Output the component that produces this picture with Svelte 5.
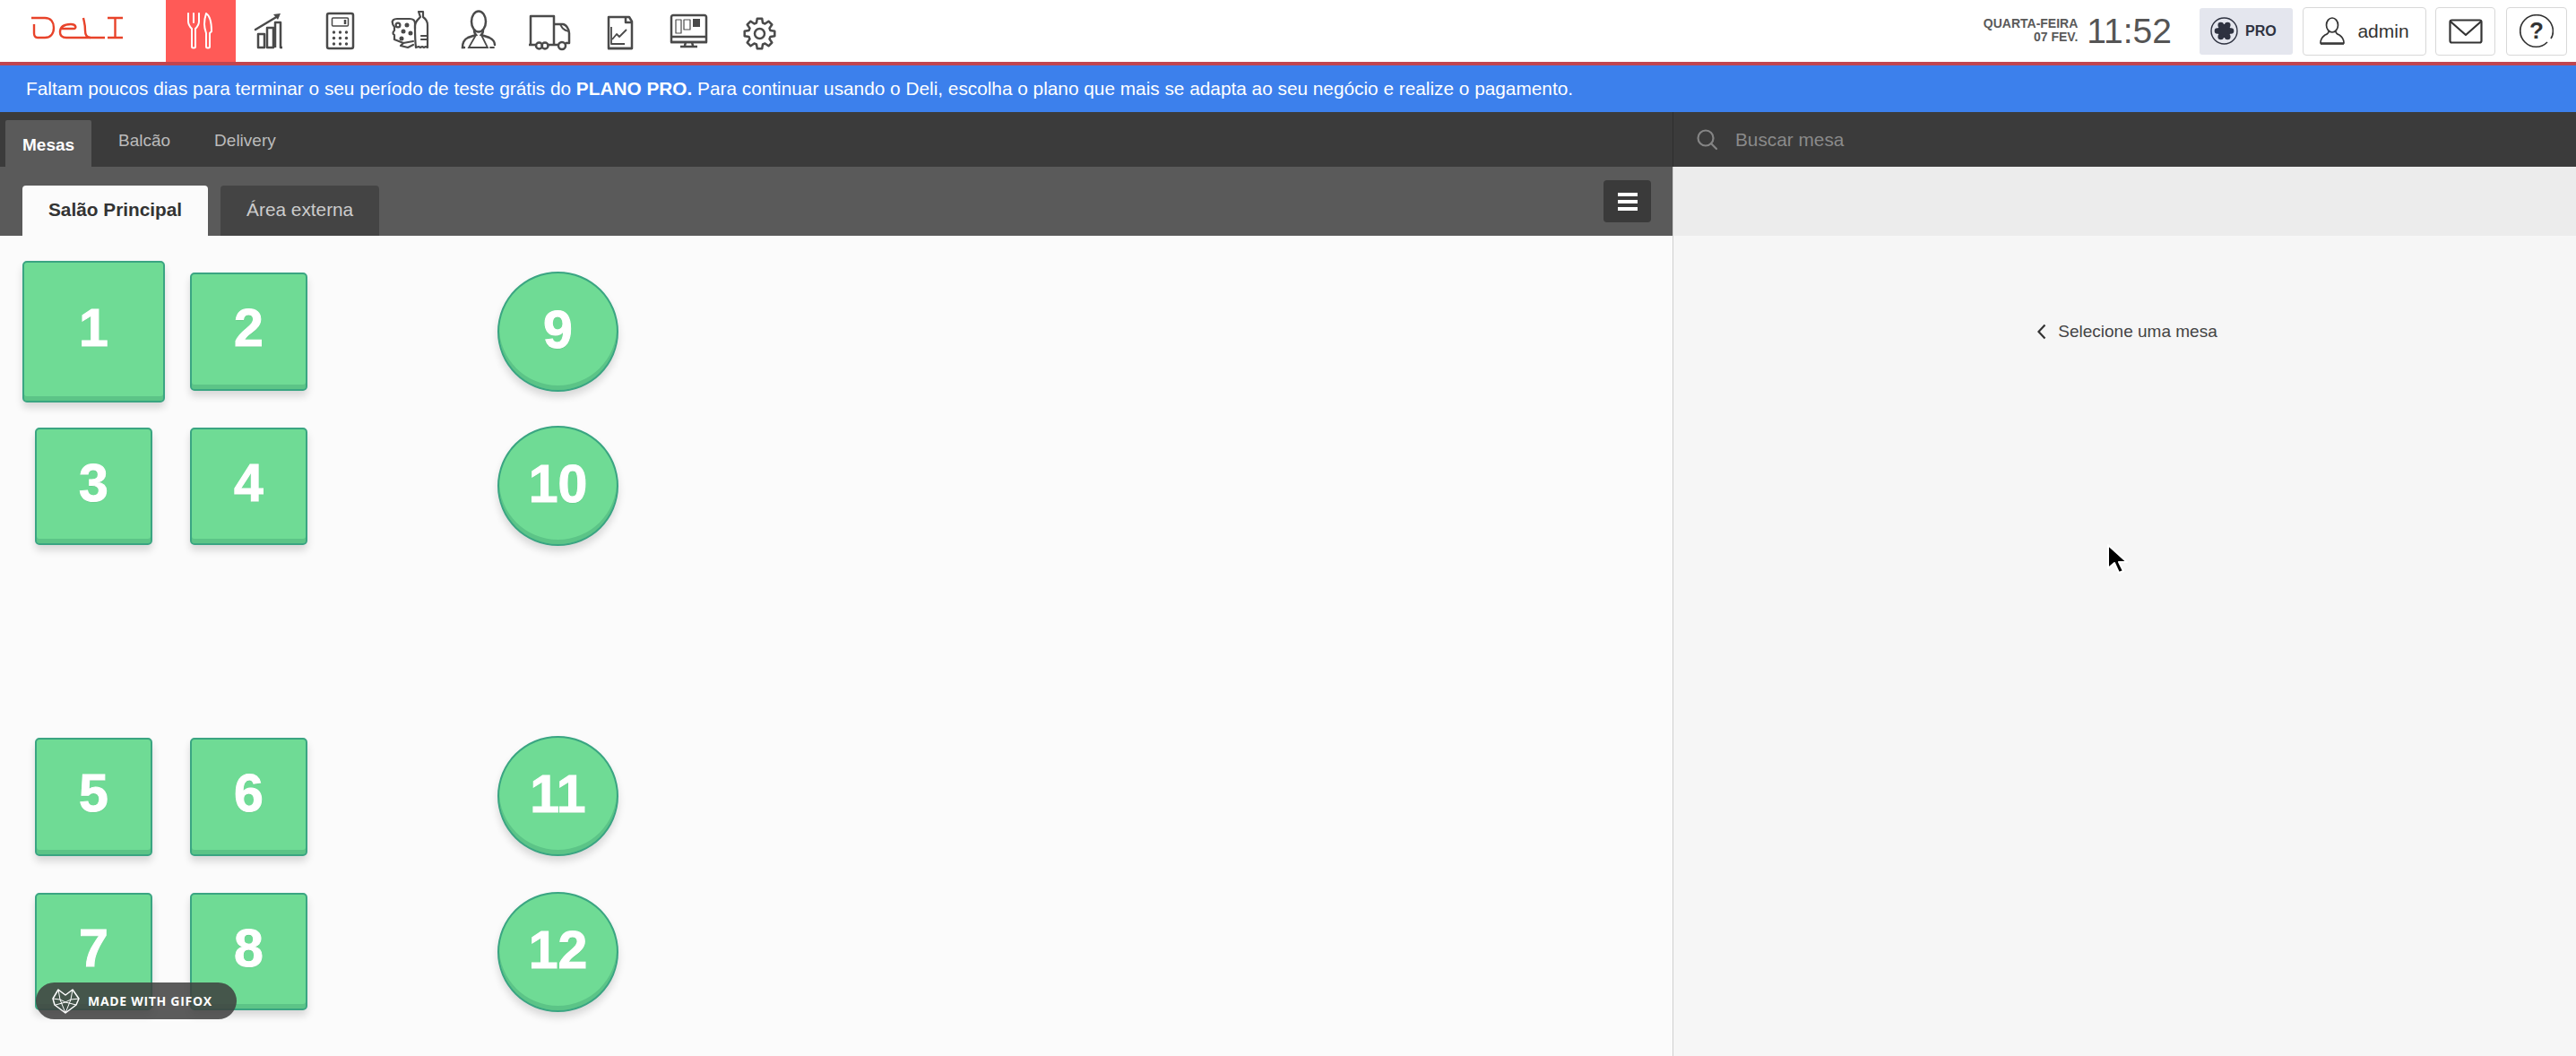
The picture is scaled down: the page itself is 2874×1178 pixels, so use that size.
<script>
    const tables = [
        { n: 1, x: 25, y: 28, w: 159, h: 158 },
        { n: 2, x: 212, y: 41, w: 131, h: 132 },
        { n: 3, x: 39, y: 214, w: 131, h: 131 },
        { n: 4, x: 212, y: 214, w: 131, h: 131 },
        { n: 5, x: 39, y: 560, w: 131, h: 132 },
        { n: 6, x: 212, y: 560, w: 131, h: 132 },
        { n: 7, x: 39, y: 733, w: 131, h: 131 },
        { n: 8, x: 212, y: 733, w: 131, h: 131 },
        { n: 9, x: 555, y: 40, w: 135, h: 134, round: true },
        { n: 10, x: 555, y: 212, w: 135, h: 134, round: true },
        { n: 11, x: 555, y: 558, w: 135, h: 134, round: true },
        { n: 12, x: 555, y: 732, w: 135, h: 134, round: true }
    ];

    // engrenagem de 8 dentes
    function gearPath(cx, cy, ro, ri, teeth) {
        const pts = [];
        const step = (Math.PI * 2) / teeth;
        for (let i = 0; i < teeth; i++) {
            const a = i * step - Math.PI / 2;
            const p = [
                [ri, a - step * 0.36],
                [ro, a - step * 0.2],
                [ro, a + step * 0.2],
                [ri, a + step * 0.36]
            ];
            for (const [r, t] of p) {
                pts.push(`${(cx + r * Math.cos(t)).toFixed(1)} ${(cy + r * Math.sin(t)).toFixed(1)}`);
            }
        }
        return 'M' + pts.join('L') + 'Z';
    }

    const lobes = [0, 60, 120, 180, 240, 300].map((d) => {
        const a = (d * Math.PI) / 180;
        return { x: 15.5 + 7.5 * Math.cos(a), y: 15.5 + 7.5 * Math.sin(a) };
    });

    const calcDots = [];
    for (let r = 0; r < 3; r++) {
        for (let c = 0; c < 3; c++) {
            calcDots.push({ x: 14.5 + c * 7, y: 24 + r * 6.5 });
        }
    }
</script>

<div class="app">
    <header class="top">
        <div class="logo">
            <svg width="110" height="30" viewBox="0 0 110 30" fill="none" stroke="#e8432a" stroke-width="2.400">
                <path d="M2 3H17C24 3 27 8 27 14 27 21 23 25 17 25H9C6 25 5 23 5 20V10" />
                <path d="M35 15H49C53 15 52 10 46 10 40 10 34 12 34 19 34 23 37 25 41 25H84" />
                <path d="M60 3C61 8 62 10 62 17 62 22 64 25 68 25" />
                <path d="M87 3h17M95.500 3v22M87 25h17" />
            </svg>
        </div>
        <nav class="modules">
            <div class="module active">
                <svg viewBox="0 0 44 44" fill="none" stroke="#fff" stroke-width="2" stroke-linecap="round" stroke-linejoin="round">
                    <path d="M8 3v9c0 4 2 6 4 8v20c0 2 4 2 4 0V20c2-2 4-4 4-8V3M14 3v10" />
                    <path d="M28 3c5 3 6 12 6 20l-2 2v15c0 2-4 2-4 0V25c-1-3-2-6-2-10s1-9 2-12z" />
                </svg>
            </div>
            <div class="module">
                <svg viewBox="0 0 44 44" fill="none" stroke="#4a4a4a" stroke-width="2.500" stroke-linejoin="round">
                    <path d="M5 21 30 6" stroke-linecap="round" />
                    <path d="M25 4l8-1-3 7z" fill="#4a4a4a" stroke="none" />
                    <path d="M8 41V26h7v15zM18 41V19h7v22zM27 41V13h6v28h2" />
                </svg>
            </div>
            <div class="module">
                <svg viewBox="0 0 44 44" fill="none" stroke="#4a4a4a" stroke-width="2.500">
                    <rect x="7" y="3" width="29" height="39" rx="2" />
                    <rect x="12.500" y="8" width="18" height="9" rx="1" stroke-width="1.500" />
                    <path d="M27 10v5" />
                    {#each calcDots as d}
                        <circle cx={d.x} cy={d.y} r="1.700" fill="#4a4a4a" stroke="none" />
                    {/each}
                </svg>
            </div>
            <div class="module">
                <svg viewBox="0 0 44 44" fill="none" stroke="#4a4a4a" stroke-width="2.200" stroke-linejoin="round" stroke-linecap="round">
                    <path d="M27 20V14c0-4-3-5-6-5H7c-4 0-6 2-5 5 0 2 1 3 2 4v4c-2 2-2 4 0 5v5l10 4 11-2" />
                    <path d="M14 36l-3 3 8 2 6-3" />
                    <circle cx="8" cy="16" r="2.400" />
                    <circle cx="18" cy="16" r="1.400" fill="#4a4a4a" />
                    <circle cx="14" cy="23" r="1.400" fill="#4a4a4a" />
                    <circle cx="22" cy="25" r="1.400" fill="#4a4a4a" />
                    <circle cx="12" cy="31" r="1.400" fill="#4a4a4a" />
                    <path d="M31 1h5v6c3 2 5 5 5 9v25l-2-1-2 1-2-1-2 1-2-1-3 1c-1-8-1-16-1-24 0-5 4-8 6-10z" />
                    <path d="M34 28h7M34 32h7" />
                </svg>
            </div>
            <div class="module">
                <svg viewBox="0 0 44 44" fill="none" stroke="#4a4a4a" stroke-width="2.500" stroke-linecap="round">
                    <ellipse cx="20" cy="12" rx="8" ry="11.500" />
                    <path d="M15 22c0 3 1 4 2 5L8 30c-4 2-6 5-6 11h2" />
                    <path d="M25 22c0 3-1 4-2 5l9 3c4 2 6 5 6 8" />
                    <path d="M17 27 9 41h21l-7-14M33 41h4" stroke-width="1.800" />
                </svg>
            </div>
            <div class="module">
                <svg viewBox="0 0 44 44" fill="none" stroke="#4a4a4a" stroke-width="2.500" stroke-linejoin="round">
                    <path d="M0 38V6h26v32" />
                    <path d="M26 15h10c3 0 7 5 7 10v11h-4" />
                    <path d="M33 15c2 4 3 6 9 8" stroke-width="1.800" />
                    <path d="M-2 38h8M19 38h12" />
                    <circle cx="9.500" cy="39" r="3.500" />
                    <circle cx="16" cy="39" r="3.500" />
                    <circle cx="35" cy="39" r="4" />
                </svg>
            </div>
            <div class="module">
                <svg viewBox="0 0 44 44" fill="none" stroke="#4a4a4a" stroke-width="2.500" stroke-linejoin="round">
                    <path d="M32 7H9v35h26V12z" />
                    <path d="M28 7v6h7" />
                    <path d="M12 18v19h15" stroke-width="1.800" />
                    <path d="M13 32l5-6 3 3 8-8" stroke-width="1.800" />
                    <path d="M8 42h27" />
                </svg>
            </div>
            <div class="module">
                <svg viewBox="0 0 44 44" fill="none" stroke="#4a4a4a" stroke-width="2.500" stroke-linejoin="round">
                    <path d="M1 35V7c0-1 1-2 2-2h35c1 0 2 1 2 2v28z" />
                    <path d="M0 35h41M1 29h39" />
                    <rect x="6" y="10" width="6" height="15" stroke-width="1.200" />
                    <rect x="15" y="10" width="7" height="11" stroke-width="1.200" />
                    <rect x="25" y="9" width="8" height="9" fill="#4a4a4a" stroke="none" />
                    <path d="M17 35l-1 4M24 35l1 4M11 40h19" />
                </svg>
            </div>
            <div class="module">
                <svg viewBox="0 0 44 44" fill="none" stroke="#4a4a4a" stroke-width="2.500" stroke-linejoin="round">
                    <path d={gearPath(21.500, 25.500, 17, 12.500, 8)} />
                    <circle cx="21.500" cy="25.500" r="5.500" />
                </svg>
            </div>
        </nav>
        <div class="top-right">
            <div class="date"><span>QUARTA-FEIRA</span><span>07 FEV.</span></div>
            <div class="clock">11:52</div>
            <div class="pro">
                <svg width="31" height="31" viewBox="0 0 31 31">
                    <circle cx="15.500" cy="15.500" r="14.500" fill="none" stroke="#2e3240" stroke-width="1.400" />
                    <circle cx="15.500" cy="15.500" r="7.500" fill="#2e3240" />
                    {#each lobes as l}
                        <circle cx={l.x} cy={l.y} r="3.300" fill="#2e3240" />
                    {/each}
                </svg>
                <span>PRO</span>
            </div>
            <div class="btn user">
                <svg width="28" height="31" viewBox="0 0 28 31" fill="none" stroke="#333" stroke-width="1.700">
                    <ellipse cx="14" cy="9" rx="6.500" ry="8" />
                    <path d="M10 16c0 2-1 3-4 4-3 2-5 4-5 9h26c0-5-2-7-5-9-3-1-4-2-4-4" />
                    <path d="M1 30h26" />
                </svg>
                <span>admin</span>
            </div>
            <div class="btn mail">
                <svg width="38" height="28" viewBox="0 0 38 28" fill="none" stroke="#333" stroke-width="2.200" stroke-linejoin="round">
                    <rect x="1.500" y="1.500" width="35" height="25" rx="2" />
                    <path d="M2 3l17 15L36 3" />
                </svg>
            </div>
            <div class="btn help">
                <svg width="38" height="38" viewBox="0 0 38 38" fill="none" stroke="#333" stroke-width="1.700">
                    <path d="M31 31C24 38 13 38 6 31-1 24-1 13 6 6c7-7 19-7 26 0 6 6 7 15 3 21" />
                    <text x="19" y="27" class="qmark">?</text>
                </svg>
            </div>
        </div>
    </header>

    <div class="banner">Faltam poucos dias para terminar o seu período de teste grátis do <b>PLANO PRO.</b> Para continuar usando o Deli, escolha o plano que mais se adapta ao seu negócio e realize o pagamento.</div>

    <main class="content">
        <section class="left">
            <div class="tabs">
                <div class="tab current">Mesas</div>
                <div class="tab">Balcão</div>
                <div class="tab">Delivery</div>
            </div>
            <div class="rooms">
                <div class="room selected">Salão Principal</div>
                <div class="room">Área externa</div>
                <button class="menu" aria-label="menu">
                    <span></span><span></span><span></span>
                </button>
            </div>
            <div class="floor">
                {#each tables as t}
                    <div class="table" class:round={t.round} style="left:{t.x}px;top:{t.y}px;width:{t.w}px;height:{t.h}px">{t.n}</div>
                {/each}
                <div class="gifox">
                    <svg width="31" height="28" viewBox="0 0 31 28" fill="none" stroke="#fff" stroke-width="1.500" stroke-linejoin="round">
                        <path d="M1 11 7 1l8 6 8-6 7 10-3 7-12 9-12-9z" />
                        <path d="M7 1l2 11 6 3 6-3 2-11M1 11l8 1M30 11l-9 1M9 12l6 15 6-15M4 18l11-3 12 3" stroke-width="1" />
                    </svg>
                    <span>MADE WITH GIFOX</span>
                </div>
            </div>
        </section>
        <aside class="right">
            <div class="search">
                <svg width="24" height="24" viewBox="0 0 24 24" fill="none" stroke="#858585" stroke-width="2.200" stroke-linecap="round">
                    <circle cx="10" cy="10" r="8.500" />
                    <path d="M16 16l6 6" />
                </svg>
                <span>Buscar mesa</span>
            </div>
            <div class="strip"></div>
            <div class="empty">
                <div class="hint">
                    <svg width="10" height="18" viewBox="0 0 10 18" fill="none" stroke="#333" stroke-width="2.200">
                        <path d="M8.500 1.500 1.500 9l7 7.500" />
                    </svg>
                    <span>Selecione uma mesa</span>
                </div>
            </div>
        </aside>
    </main>

    <svg class="cursor" width="26" height="36" viewBox="0 0 26 36">
        <path d="M2 2v26l7-6 5 11 5-2-5-10h9z" fill="#000" stroke="#fff" stroke-width="2" stroke-linejoin="round" />
    </svg>
</div>

<style>
    :global(body) {
        margin: 0;
        background: #fff;
        font-family: "Liberation Sans", Arial, sans-serif;
    }

    .app {
        position: relative;
        width: 2874px;
        height: 1178px;
        overflow: hidden;
        display: flex;
        flex-direction: column;
    }

    /* barra superior */
    .top {
        height: 73px;
        box-sizing: border-box;
        border-bottom: 4px solid #c0454f;
        display: flex;
        align-items: stretch;
        background: #fff;
        flex: none;
    }

    .logo {
        width: 185px;
        flex: none;
        padding: 17px 0 0 33px;
        box-sizing: border-box;
    }

    .modules {
        display: flex;
    }

    .module {
        width: 78px;
        display: flex;
        justify-content: center;
        padding-top: 12px;
        box-sizing: border-box;
    }

    .module svg {
        width: 44px;
        height: 44px;
        overflow: visible;
    }

    .module.active {
        background: #ff5a57;
    }

    .top-right {
        margin-left: auto;
        display: flex;
        align-items: center;
        padding-right: 10px;
    }

    .date {
        display: flex;
        flex-direction: column;
        align-items: flex-end;
        font-size: 14px;
        line-height: 15px;
        font-weight: 700;
        color: #5a5a5a;
        white-space: nowrap;
        margin-right: 10px;
        margin-top: -2px;
    }

    .clock {
        font-size: 39px;
        line-height: 44px;
        color: #555;
        margin-right: 31px;
    }

    .pro {
        width: 104px;
        height: 52px;
        margin-right: 11px;
        background: #e4e6ee;
        border-radius: 3px;
        display: flex;
        align-items: center;
        padding-left: 12px;
        box-sizing: border-box;
        gap: 8px;
        color: #2e3240;
        font-weight: 700;
        font-size: 16px;
    }

    .btn {
        height: 54px;
        border: 1px solid #d8d8d8;
        border-radius: 4px;
        box-sizing: border-box;
        background: #fff;
        display: flex;
        align-items: center;
        justify-content: center;
        color: #333;
    }

    .btn.user {
        width: 138px;
        gap: 14px;
        font-size: 21px;
        margin-right: 10px;
    }

    .btn.mail {
        width: 67px;
        margin-right: 12px;
    }

    .btn.help {
        width: 68px;
    }

    .qmark {
        font-size: 26px;
        font-weight: 700;
        text-anchor: middle;
        fill: #333;
        stroke: none;
    }

    /* aviso */
    .banner {
        height: 52px;
        flex: none;
        background: #3c80ec;
        color: #fff;
        font-size: 20.800px;
        line-height: 52px;
        padding-left: 29px;
        white-space: nowrap;
    }

    .content {
        flex: 1;
        display: flex;
        min-height: 0;
    }

    .left {
        width: 1866px;
        flex: none;
        display: flex;
        flex-direction: column;
    }

    .tabs {
        height: 61px;
        flex: none;
        background: #3b3b3b;
        display: flex;
        align-items: flex-end;
        padding-left: 6px;
        box-sizing: border-box;
    }

    .tab {
        height: 52px;
        box-sizing: border-box;
        padding: 0 24px;
        margin-right: 1px;
        font-size: 19px;
        line-height: 45px;
        color: #bbb;
    }

    .tab.current {
        width: 96px;
        padding: 0 0 0 19px;
        margin-right: 6px;
        background: #5a5a5a;
        color: #fff;
        font-weight: 700;
        line-height: 55px;
        border-radius: 2px 2px 0 0;
    }

    .rooms {
        height: 77px;
        flex: none;
        background: #5a5a5a;
        display: flex;
        align-items: flex-end;
        padding-left: 25px;
        gap: 14px;
        position: relative;
    }

    .room {
        height: 56px;
        padding: 0 29px;
        background: #444;
        color: #ccc;
        font-size: 20.800px;
        line-height: 53px;
        border-radius: 4px 4px 0 0;
    }

    .room.selected {
        background: #fbfbfb;
        color: #333;
        font-weight: 700;
    }

    .menu {
        position: absolute;
        left: 1789px;
        top: 15px;
        width: 53px;
        height: 47px;
        border: 0;
        padding: 0;
        background: #3a3a3a;
        border-radius: 4px;
        display: flex;
        flex-direction: column;
        align-items: center;
        justify-content: center;
        gap: 4px;
    }

    .menu span {
        display: block;
        width: 22px;
        height: 4px;
        background: #fff;
    }

    /* mapa de mesas */
    .floor {
        flex: 1;
        position: relative;
        background: #fbfbfb;
    }

    .table {
        position: absolute;
        box-sizing: border-box;
        background: #6fdb95;
        border: 2px solid #3aa582;
        border-radius: 5px;
        box-shadow: inset 0 -5px 0 #5cc487, 0 6px 8px rgba(0, 0, 0, 0.14);
        color: #fff;
        font-size: 59px;
        font-weight: 700;
        -webkit-text-stroke: 1px #fff;
        display: flex;
        align-items: center;
        justify-content: center;
        padding-bottom: 8px;
        text-shadow: 0 1px 1px rgba(0, 0, 0, 0.12);
    }

    .table.round {
        border-radius: 50%;
        padding-bottom: 5px;
    }

    .gifox {
        position: absolute;
        left: 40px;
        top: 833px;
        width: 224px;
        height: 41px;
        border-radius: 21px;
        background: rgba(62, 62, 62, 0.85);
        display: flex;
        align-items: center;
        gap: 9px;
        padding-left: 18px;
        box-sizing: border-box;
        color: #fff;
        font-family: "Open Sans", sans-serif;
        font-weight: 700;
        font-size: 14px;
        letter-spacing: 0.7px;
        white-space: nowrap;
    }

    /* painel direito */
    .right {
        flex: 1;
        display: flex;
        flex-direction: column;
        border-left: 1px solid #cfcfcf;
    }

    .search {
        height: 61px;
        flex: none;
        background: #3b3b3b;
        display: flex;
        align-items: center;
        padding-left: 26px;
        gap: 19px;
        color: #8a8a8a;
        font-size: 20.800px;
        box-sizing: border-box;
        margin-left: -1px;
        border-left: 1px solid #2e2e2e;
    }

    .strip {
        height: 77px;
        flex: none;
        background: #ececec;
    }

    .empty {
        flex: 1;
        background: #f6f6f6;
        display: flex;
        justify-content: center;
        padding-top: 95px;
    }

    .hint {
        display: flex;
        align-items: center;
        gap: 13px;
        height: 24px;
        font-size: 19px;
        color: #444;
        margin-left: 6px;
    }

    .cursor {
        position: absolute;
        left: 2350px;
        top: 606px;
    }
</style>
